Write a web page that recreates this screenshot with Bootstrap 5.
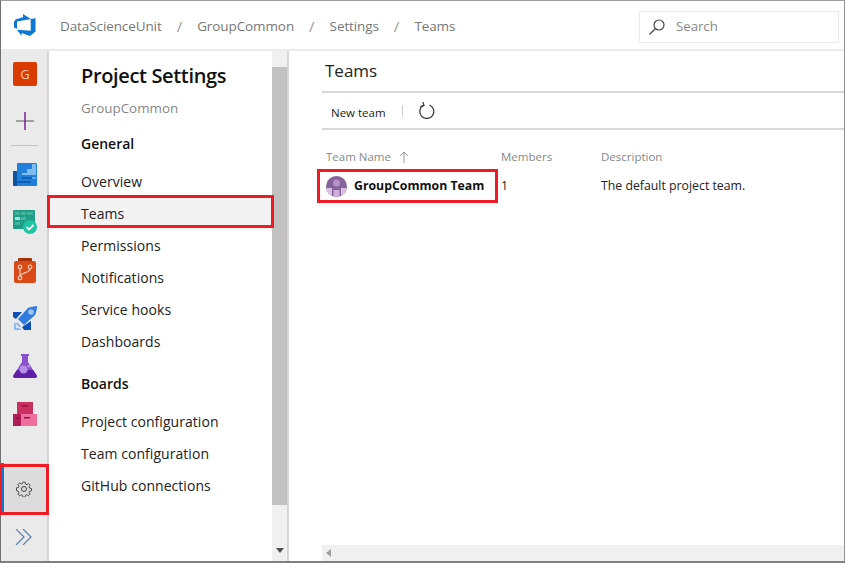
<!DOCTYPE html>
<html>
<head>
    <title>Teams - Project Settings</title>
    <link rel="stylesheet" href="https://cdn.jsdelivr.net/npm/bootstrap@5.3.0/dist/css/bootstrap.min.css">
    <style>
        html, body { height: 100%; overflow: hidden; background: #fff; }
        body { font-family: "Open Sans", "Noto Sans", sans-serif; font-size: 14px; color: #222; }
        .app-frame { width: 845px; height: 563px; border-top: 1px solid #a0a0a0; border-left: 1px solid #707070; border-right: 1px solid #909090; border-bottom: 2px solid #808080; position: relative; }
        .top-strip { height: 50px; border-bottom: 2px solid #eaeaea; }
        .logo-cell { width: 47px; }
        .crumb { color: #777; font-size: 13.5px; letter-spacing: -.1px; padding-top: 3px; }
        .crumb-sep { color: #999; font-size: 15px; margin: 0 15px; padding-top: 3px; }
        .search-box { width: 200px; height: 32px; border: 1px solid #eaeaea; margin-right: 5px; margin-top: 3px; color: #888; font-size: 13.2px; padding-left: 8px; gap: 10px; }
        .body-area { height: 510px; }
        .hub-bar { width: 48px; background: #eaeaea; border-right: 2px solid #d4d4d4; }
        .hub-slot { height: 48px; padding-left: 1px; }
        .hub-first { height: 46px; }
        .hub-rule { width: 27px; height: 1px; background: #c4c4c4; margin: 0 auto 4px; }
        .hub-gear { height: 50px; background: #dcdcdc; border-left: 3px solid #0a78d4; margin-top: 25px; padding: 2px 3px 0 0; }
        .hub-more { height: 48px; }
        .side-nav { width: 223px; padding-top: 11px; }
        .side-title { font-size: 20px; font-weight: 600; color: #111; padding-left: 32px; line-height: 28px; letter-spacing: -.35px; }
        .side-sub { color: #888; padding-left: 32px; font-size: 13.4px; margin-top: 8px; line-height: 20px; }
        .side-head { font-weight: 600; font-size: 14px; color: #111; padding-left: 32px; line-height: 32px; margin-top: 10px; }
        .side-item { font-size: 14px; letter-spacing: .05px; color: #222; padding-left: 32px; height: 32px; line-height: 32px; }
        .side-gap { margin-top: 6px; }
        .side-item.is-on { background: #f3f3f3; }
        .vscroll { width: 17px; background: #f0f0f0; border-right: 2px solid #d4d4d4; }
        .vscroll-thumb { height: 438px; background: #c1c1c1; margin-top: 16px; }
        .vscroll-arrow { height: 16px; }
        .main-pane { padding-left: 33px; min-width: 0; }
        .page-name { font-size: 17px; color: #222; padding-left: 3px; height: 42px; line-height: 40px; border-bottom: 2px solid #d8d8d8; }
        .tool-row { height: 37px; border-bottom: 2px solid #d8d8d8; font-size: 11.5px; padding-left: 9px; }
        .tool-text { padding-top: 5px; }
        .tool-div { width: 1px; height: 12px; background: #ccc; margin: 0 16px 0 16px; }
        .grid-head { color: #888; font-size: 11.5px; margin-top: 17px; height: 20px; padding-left: 4px; }
        .grid-row { font-size: 12.3px; height: 32px; padding-left: 4px; margin-top: 3px; }
        .col-team { width: 175px; }
        .col-members { width: 100px; }
        .team-name { font-weight: 700; color: #111; font-size: 12.3px; margin-left: 7px; }
        .hscroll { height: 16px; background: #f0f0f0; margin-top: auto; }
        .red-mark { position: absolute; border: 3px solid #ed1c24; }
        .mark-teams { left: 46px; top: 194px; width: 227px; height: 33px; }
        .mark-row { left: 316px; top: 168px; width: 181px; height: 34px; }
        .mark-gear { left: -1px; top: 463px; width: 49px; height: 51px; border-left-width: 2px; }
    </style>
</head>
<body>
    <div class="app-frame">
        <div class="top-strip d-flex align-items-center">
            <div class="logo-cell d-flex justify-content-center">
                <svg width="24" height="24" viewBox="0 0 24 24">
                    <path fill="#0a78d4" d="M22.500 5.300v13.300L17 23l-8.400-3.100v3l-4.700-6.200 13.800 1.100V6.100zM17.900 6 10 1v3.200L2.900 6.300 1 8.800v5.700l3 1.300V8.500z"/>
                </svg>
            </div>
            <div class="d-flex align-items-center ms-2 flex-grow-1">
                <span class="crumb" style="margin-left: 4px">DataScienceUnit</span><span class="crumb-sep">/</span>
                <span class="crumb">GroupCommon</span><span class="crumb-sep">/</span>
                <span class="crumb">Settings</span><span class="crumb-sep">/</span>
                <span class="crumb">Teams</span>
            </div>
            <div class="search-box d-flex align-items-center">
                <svg width="18" height="18" viewBox="0 0 18 18" fill="none" stroke="#444" stroke-width="1.200">
                    <circle cx="11" cy="7" r="5"/><path d="M7.500 10.500 1.500 16.500"/>
                </svg>
                <span>Search</span>
            </div>
        </div>

        <div class="body-area d-flex">
            <div class="hub-bar flex-shrink-0">
                <div class="hub-slot hub-first d-flex justify-content-center align-items-center">
                    <svg width="24" height="24" viewBox="0 0 24 24"><rect width="24" height="24" rx="2" fill="#da3b01"/><text x="12" y="17" text-anchor="middle" font-size="13" fill="#f9c9b5" font-family="Open Sans, sans-serif">G</text></svg>
                </div>
                <div class="hub-slot d-flex justify-content-center align-items-center">
                    <svg width="18" height="18" viewBox="0 0 18 18"><path d="M0 9h18" stroke="#888" stroke-width="1.500"/><path d="M9 0v18" stroke="#7a1f8f" stroke-width="1.500"/></svg>
                </div>
                <div class="hub-rule"></div>
                <div class="hub-slot d-flex justify-content-center align-items-center">
                    <svg width="24" height="23" viewBox="0 0 24 23"><path d="M0 8h6v15H1a1 1 0 0 1-1-1z" fill="#0b559f"/><rect x="4" y="0" width="20" height="23" rx="1" fill="#1f7fdb"/><path d="M9 10h5V6h5V1h4v11H9z" fill="#7fbcee"/><path d="M9 14h14v2H9zM4 18h14v2H4z" fill="#0f62b5"/><path d="M19 14h4v2h-4z" fill="#5ea9e8"/></svg>
                </div>
                <div class="hub-slot d-flex justify-content-center align-items-center">
                    <svg width="24" height="24" viewBox="0 0 24 24"><rect x="0" y="0" width="22" height="19" rx="1" fill="#1f9c85"/><path d="M2 2h5v3H2zM8 2h5v3H8zM14 2h6v3h-6zM8 7h5v3H8zM2 12h5v3H2z" fill="#45b59f"/><path d="M2 7h5v3H2z" fill="#a6e3d6"/><circle cx="17" cy="17" r="7" fill="#1dc4a3"/><path d="M13.500 17l2.500 2.500 4.500-4.500" fill="none" stroke="#fff" stroke-width="1.800"/></svg>
                </div>
                <div class="hub-slot d-flex justify-content-center align-items-center">
                    <svg width="22" height="25" viewBox="0 0 22 25"><rect x="4" y="0" width="14" height="6" rx="1" fill="#a83208"/><rect x="0" y="3" width="22" height="22" rx="2" fill="#da4a17"/><g fill="none" stroke="#f5c4ae" stroke-width="1.300"><circle cx="6" cy="9" r="1.800"/><circle cx="16" cy="9" r="1.800"/><circle cx="6" cy="20" r="1.800"/><path d="M6 11v7M16 11c0 4-8 3-10 7"/></g></svg>
                </div>
                <div class="hub-slot d-flex justify-content-center align-items-center">
                    <svg width="24" height="24" viewBox="0 0 24 24"><path d="M0 6h9L3 13 0 11zM18 15v9h-7l-2-3z" fill="#0c4fb5"/><path d="M5 13 15 2c2-1 7-2 9-2 0 3-1 7-2 9L11 19z" fill="#2f7be0"/><circle cx="18" cy="6" r="2.800" fill="#9cc7f5"/><path d="M1 16v8h8l-3-2 2-2-4-4-1 2z" fill="#8fb8f0"/><path d="M3 18v4h4z" fill="#eaeaea"/></svg>
                </div>
                <div class="hub-slot d-flex justify-content-center align-items-center">
                    <svg width="24" height="24" viewBox="0 0 24 24"><path d="M8 0h8v2h-1v6l9 14c0 1-1 2-2 2H2c-1 0-2-1-2-2L9 8V2H8z" fill="#8a4fcb"/><path d="M4 16h16l4 6c0 1-1 2-2 2H2c-1 0-2-1-2-2z" fill="#5e1fa8"/><circle cx="10.500" cy="15.500" r="4" fill="#b68ce4"/><circle cx="16" cy="12" r="1.500" fill="#b68ce4"/></svg>
                </div>
                <div class="hub-slot d-flex justify-content-center align-items-center">
                    <svg width="24" height="24" viewBox="0 0 24 24"><rect x="4" y="0" width="16" height="13" fill="#c8305f"/><rect x="0" y="12" width="12" height="12" fill="#b01c55"/><rect x="8" y="12" width="16" height="12" fill="#ef6f9e"/><path d="M9 3h6v1.500H9zM3 15h3v1.500H3zM11 15h6v1.500h-6z" fill="#8e1446"/></svg>
                </div>
                <div class="hub-gear d-flex justify-content-center align-items-center">
                    <svg width="16" height="16" viewBox="0 0 16 16" fill="none" stroke="#444" stroke-width="1">
                        <circle cx="8" cy="8" r="2.500"/>
                        <path d="M6.800.8h2.400l.4 2 1.400.6 1.700-1.100 1.700 1.700-1.100 1.700.6 1.400 2 .4v2.400l-2 .4-.6 1.400 1.100 1.700-1.700 1.700-1.700-1.100-1.400.6-.4 2H6.800l-.4-2-1.400-.6-1.700 1.100-1.700-1.700 1.100-1.700-.6-1.400-2-.4V6.800l2-.4.6-1.400-1.100-1.700 1.700-1.700 1.700 1.100 1.400-.6z" transform="translate(.4 .4) scale(.95)"/>
                    </svg>
                </div>
                <div class="hub-more d-flex justify-content-center align-items-center">
                    <svg width="18" height="16" viewBox="0 0 18 16" fill="none" stroke="#5b7fa6" stroke-width="1.200"><path d="M1 0l8 8-8 8M8 0l8 8-8 8"/></svg>
                </div>
            </div>

            <div class="side-nav flex-shrink-0">
                <div class="side-title">Project Settings</div>
                <div class="side-sub">GroupCommon</div>
                <div class="side-head">General</div>
                <div class="side-item side-gap">Overview</div>
                <div class="side-item is-on">Teams</div>
                <div class="side-item">Permissions</div>
                <div class="side-item">Notifications</div>
                <div class="side-item">Service hooks</div>
                <div class="side-item">Dashboards</div>
                <div class="side-head">Boards</div>
                <div class="side-item side-gap">Project configuration</div>
                <div class="side-item">Team configuration</div>
                <div class="side-item">GitHub connections</div>
            </div>

            <div class="vscroll flex-shrink-0 d-flex flex-column">
                <div class="vscroll-thumb"></div>
                <div class="vscroll-arrow d-flex justify-content-center align-items-end mt-auto mb-2">
                    <svg width="8" height="5" viewBox="0 0 8 5"><path d="M0 0h8L4 5z" fill="#505050"/></svg>
                </div>
            </div>

            <div class="main-pane flex-grow-1 d-flex flex-column">
                <div class="page-name">Teams</div>
                <div class="tool-row d-flex align-items-center">
                    <span class="tool-text">New team</span>
                    <span class="tool-div"></span>
                    <svg width="16" height="17" viewBox="0 0 16 17" fill="none" stroke="#333" stroke-width="1.200"><path d="M4.500 3.300a7 7 0 1 0 6 -.3"/><path d="M4 0l1 3.700-3.700 1"/></svg>
                </div>
                <div class="grid-head d-flex align-items-center">
                    <div class="col-team d-flex align-items-center gap-1">Team Name
                        <svg class="ms-1" width="10" height="12" viewBox="0 0 10 12" fill="none" stroke="#999"><path d="M5 12V1M1 5l4-4 4 4"/></svg>
                    </div>
                    <div class="col-members">Members</div>
                    <div>Description</div>
                </div>
                <div class="grid-row d-flex align-items-center">
                    <div class="col-team d-flex align-items-center">
                        <svg width="21" height="21" viewBox="0 0 21 21">
                            <clipPath id="avatarClip"><circle cx="10.500" cy="10.500" r="10.500"/></clipPath>
                            <g clip-path="url(#avatarClip)">
                                <rect width="21" height="21" fill="#86639a"/>
                                <circle cx="10.500" cy="7" r="3.500" fill="#b592c6"/>
                                <path d="M1 12h5v9H1zM15 12h5v9h-5z" fill="#d8bfe3"/>
                                <path d="M7.500 14h6v7h-6z" fill="#cfaedb"/>
                            </g>
                        </svg>
                        <span class="team-name">GroupCommon Team</span>
                    </div>
                    <div class="col-members">1</div>
                    <div>The default project team.</div>
                </div>
                <div class="hscroll d-flex align-items-center">
                    <svg class="ms-1" width="5" height="8" viewBox="0 0 5 8"><path d="M5 0v8L0 4z" fill="#a0a0a0"/></svg>
                </div>
            </div>
        </div>

        <div class="red-mark mark-teams"></div>
        <div class="red-mark mark-row"></div>
        <div class="red-mark mark-gear"></div>
    </div>
    <script src="https://cdn.jsdelivr.net/npm/bootstrap@5.3.0/dist/js/bootstrap.bundle.min.js"></script>
</body>
</html>
